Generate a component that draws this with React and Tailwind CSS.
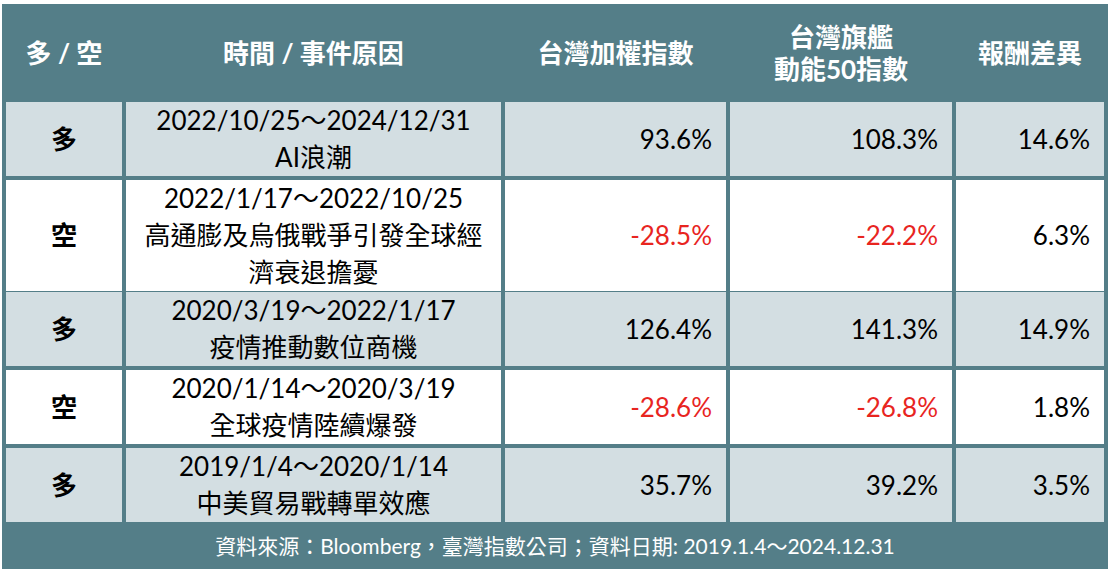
import React from "react";

const cols = "grid grid-cols-[116px_375px_221px_222px_148px] gap-x-[4px]";

const rows = [
  { side: "多", lines: ["2022/10/25～2024/12/31", "AI浪潮"], a: "93.6%", b: "108.3%", d: "14.6%", bg: "bg-[#d3dee2]", h: "h-[74px]" },
  { side: "空", lines: ["2022/1/17～2022/10/25", "高通膨及烏俄戰爭引發全球經", "濟衰退擔憂"], a: "-28.5%", b: "-22.2%", d: "6.3%", bg: "bg-white", h: "h-[108px]", red: true },
  { side: "多", lines: ["2020/3/19～2022/1/17", "疫情推動數位商機"], a: "126.4%", b: "141.3%", d: "14.9%", bg: "bg-[#d3dee2]", h: "h-[74px]" },
  { side: "空", lines: ["2020/1/14～2020/3/19", "全球疫情陸續爆發"], a: "-28.6%", b: "-26.8%", d: "1.8%", bg: "bg-white", h: "h-[74px]", red: true },
  { side: "多", lines: ["2019/1/4～2020/1/14", "中美貿易戰轉單效應"], a: "35.7%", b: "39.2%", d: "3.5%", bg: "bg-[#d3dee2]", h: "h-[74px]" },
];

export default function App() {
  return (
    <div
      className="w-[1112px] h-[572px] bg-white pl-[2px] pt-[4px]"
      style={{ fontFamily: 'Lato, "Noto Sans CJK TC", sans-serif' }}
    >
      <div className="w-[1106px] bg-[#547e88] px-[4px] flex flex-col">
        <div className={`${cols} h-[98px] items-center text-white font-bold text-[26px] leading-[32px] text-center`}>
          <div>多 / 空</div>
          <div>時間 / 事件原因</div>
          <div>台灣加權指數</div>
          <div>
            台灣旗艦
            <br />
            動能50指數
          </div>
          <div>報酬差異</div>
        </div>
        <div className="flex flex-col gap-y-[4px]">
          {rows.map((r, i) => (
            <div key={i} className={`${cols} ${r.h} text-[26px] leading-[37px] text-black`}>
              <div className={`${r.bg} flex items-center justify-center font-bold text-[26px]`}>{r.side}</div>
              <div className={`${r.bg} flex flex-col items-center justify-center text-center`}>
                {r.lines.map((l, j) => (
                  <div key={j}>{l}</div>
                ))}
              </div>
              <div className={`${r.bg} flex items-center justify-end pr-[14px] ${r.red ? "text-[#e8251f]" : ""}`}>{r.a}</div>
              <div className={`${r.bg} flex items-center justify-end pr-[14px] ${r.red ? "text-[#e8251f]" : ""}`}>{r.b}</div>
              <div className={`${r.bg} flex items-center justify-end pr-[14px]`}>{r.d}</div>
            </div>
          ))}
        </div>
        <div className="h-[47px] flex items-center justify-center text-white text-[21px]">
          資料來源：Bloomberg，臺灣指數公司；資料日期: 2019.1.4～2024.12.31
        </div>
      </div>
    </div>
  );
}
